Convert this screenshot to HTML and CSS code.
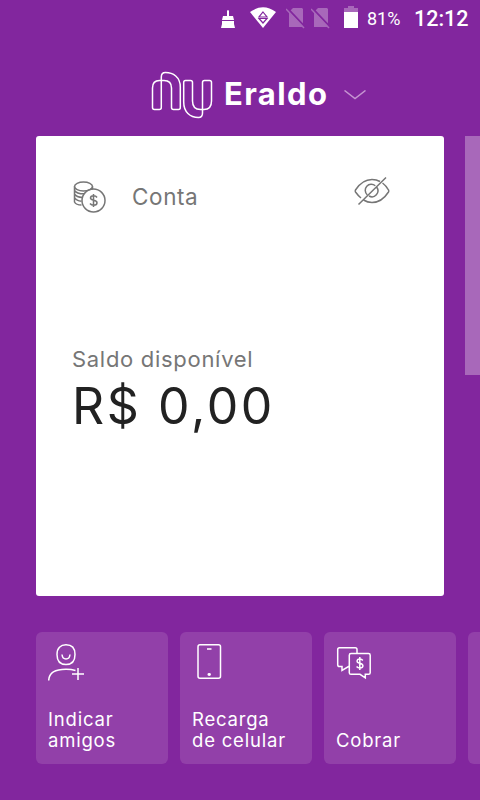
FILE: index.html
```
<!DOCTYPE html>
<html lang="pt-BR">
<head>
    <meta charset="UTF-8">
    <meta name="viewport" content="width=device-width, initial-scale=1.0">
    <title>Conta</title>
    <link rel="stylesheet" href="styles.css">
</head>
<body>
    <div class="status-bar">
        <svg class="icon-clean" width="14" height="18" viewBox="0 0 14 18" fill="#fff">
            <path d="M6 1q1-2 2 0v5h4l1 4H1l1-4h4zM1 11h12v3l1 4H0l1-4z"/>
        </svg>
        <svg class="icon-wifi" width="26" height="21" viewBox="0 0 26 21">
            <path d="M0 5Q13-4.500 26 5L13 21z" fill="#fff"/>
            <path d="M13 5l4 5H9zM9 11.500h8L13 16z" fill="none" stroke="#82269e" stroke-width="1.200"/>
        </svg>
        <svg class="icon-sim" width="20" height="21" viewBox="0 0 20 21">
            <path d="M3 4l4-4h9l1 1v18H3z" fill="#a868ba"/>
            <path d="M2 1l17 18" stroke="#82269e" stroke-width="2"/>
            <path d="M0 1l18 19" stroke="#a868ba" stroke-width="1.500"/>
        </svg>
        <svg class="icon-sim second" width="20" height="21" viewBox="0 0 20 21">
            <path d="M3 4l4-4h9l1 1v18H3z" fill="#a868ba"/>
            <path d="M2 1l17 18" stroke="#82269e" stroke-width="2"/>
            <path d="M0 1l18 19" stroke="#a868ba" stroke-width="1.500"/>
        </svg>
        <svg class="icon-battery" width="14" height="22" viewBox="0 0 14 22">
            <path d="M4 0h6v2h4v4H0V2h4z" fill="#a868ba"/>
            <path d="M0 6h14v16H0z" fill="#fff"/>
        </svg>
        <span class="battery-level">81%</span>
        <span class="clock">12:12</span>
    </div>

    <div class="header">
        <svg class="logo" width="62" height="48" viewBox="0 0 62 48">
            <path d="M1.500 36.500V17Q1.500 9.500 8.500 9.500H13Q20.500 9.500 20.500 17V36.500Q20.500 38.500 22.500 38.500H27.500Q29.300 38.500 29.300 36.500V16C29.300 6 22 1.500 14.500 1.500Q10.300 1.500 10.300 6V36.500Q10.300 38.500 8.300 38.500H3.500Q1.500 38.500 1.500 36.500Z"/>
            <path d="M60.500 11.500V30Q60.500 38.500 53 38.500H49.500Q41.500 38.500 41.500 30V11.500Q41.500 9.500 39.500 9.500H34.500Q32.700 9.500 32.700 11.500V31C32.700 41 39 46.500 47.500 46.500Q51.500 46.500 51.500 42V11.500Q51.500 9.500 53.500 9.500H58.500Q60.500 9.500 60.500 11.500Z"/>
        </svg>
        <h1>Eraldo</h1>
        <svg class="chevron" width="22" height="10" viewBox="0 0 22 10">
            <path d="M.5 .5L11 8.500 21.500 .5"/>
        </svg>
    </div>

    <div class="cards">
        <div class="card">
            <div class="card-top">
                <svg class="coins" width="34" height="32" viewBox="0 0 34 32">
                    <ellipse cx="10.500" cy="5.500" rx="9" ry="4.500"/>
                    <path d="M1.500 5.500v15.500q1.500 3 7 3M19.500 5.500v3M1.500 9.300q2 3.500 9.500 3.500M1.500 13q2 3.300 8 3.500M1.500 16.700q2 3.300 7 3.500"/>
                    <circle cx="20.500" cy="19.500" r="11.500"/>
                    <path class="dollar" d="M24 16.500q-1-1.700-3.500-1.700-3 0-3 2.300c0 3 6.500 1.500 6.500 4.600 0 1.700-1.500 2.500-3.300 2.500q-2.500 0-3.700-1.700M20.500 13v13"/>
                </svg>
                <span class="card-title">Conta</span>
                <svg class="eye" width="36" height="30" viewBox="0 0 36 30">
                    <path d="M28.500 7Q32 9.500 34.500 14q.6 1 0 2C30 23 24.500 26.500 18 26.500q-4.500 0-8.500-2.500M7 22Q4 19.500 1.500 16q-.6-1 0-2C6 7 11.500 3.500 18 3.500q4.500 0 8 2"/>
                    <path d="M22.800 11.300a6 6 0 0 1-7.800 8.700M13.200 18.700A6 6 0 0 1 21.300 9.800M32 1.500L4.500 28.500"/>
                </svg>
            </div>
            <p class="label">Saldo disponível</p>
            <p class="balance">R$ 0,00</p>
        </div>
        <div class="next-card"></div>
    </div>

    <div class="actions">
        <div class="action">
            <svg width="38" height="38" viewBox="0 0 38 38">
                <path d="M18 .8C23.500 .8 27 4 27 10.500S23.500 20.500 18 20.500 9 17 9 10.500 12.500 .8 18 .8ZM14 10.500q.5 4.500 4 4.500t4-4.500M.7 36.500C1 28 8 25.300 18 25.300q5.500 0 9.500 1.200M30 24v12M24 30h12"/>
            </svg>
            <span>Indicar<br>amigos</span>
        </div>
        <div class="action">
            <svg width="38" height="38" viewBox="0 0 38 38">
                <rect x="6" y=".8" width="22.500" height="33.500" rx="2"/>
                <path d="M15 5h4.500"/>
                <ellipse cx="17.200" cy="30.500" rx="1" ry=".7"/>
            </svg>
            <span>Recarga<br>de celular</span>
        </div>
        <div class="action">
            <svg width="38" height="38" viewBox="0 0 38 38">
                <path d="M13.500 22.500h-1L6 26.500v-4H3.500Q1.700 22.500 1.700 20.700V5.500Q1.700 3.700 3.500 3.700H19.300Q21 3.700 21 5.500V9.500M15 9.500H32.500Q34.200 9.500 34.200 11.200V28.700Q34.200 30.300 32.500 30.300H29.300V33.800L24 30.300H15Q13.300 30.300 13.300 28.700V11.200Q13.300 9.500 15 9.500Z"/>
                <path class="dollar" d="M26.800 16.500q-1-1.500-3-1.500-2.700 0-2.700 2.200c0 2.700 5.800 1.500 5.800 4.500 0 1.500-1.300 2.300-3 2.300q-2.200 0-3.300-1.500M23.800 13v13"/>
            </svg>
            <span>Cobrar</span>
        </div>
        <div class="action"></div>
    </div>
</body>
</html>
```
FILE: styles.css
```
* {
    box-sizing: border-box;
}
body {
    margin: 0;
    height: 800px;
    overflow: hidden;
    background: #82269e;
    color: #fff;
    font-family: Inter, sans-serif;
}
h1, p {
    margin: 0;
}
svg {
    flex-shrink: 0;
}
.status-bar {
    display: flex;
    justify-content: flex-end;
    align-items: center;
    height: 37px;
    padding-right: 13px;
    font-family: Roboto, sans-serif;
}
.icon-clean {
    margin-right: 15px;
}
.icon-wifi {
    margin: 0 10px 2px 0;
}
.icon-sim {
    margin-right: 5px;
}
.icon-sim.second {
    margin-right: 13px;
}
.icon-battery {
    margin: 0 9px 4px 0;
}
.battery-level {
    width: 33px;
    margin-right: 14px;
    font-size: 18px;
}
.clock {
    width: 53px;
    font-size: 21.500px;
    font-weight: 500;
}
.header {
    display: flex;
    align-items: center;
    height: 99px;
    padding: 15px 0 0 151px;
}
.logo, .chevron {
    fill: none;
    stroke: #fff;
    stroke-width: 1.500;
}
.logo {
    margin-top: 2px;
}
h1 {
    width: 104px;
    margin: 0 16px 0 11px;
    font-size: 31px;
    font-weight: 700;
    line-height: 40px;
    letter-spacing: 1.400px;
    white-space: nowrap;
}
.chevron {
    margin-top: 2px;
    stroke: #c594d1;
}
.cards {
    display: flex;
    gap: 21px;
    height: 460px;
    padding-left: 36px;
}
.card {
    flex: 0 0 408px;
    padding: 41px 36px 0;
    border-radius: 3px;
    background: #fff;
}
.next-card {
    flex: 1;
    height: 239px;
    background: #a868ba;
}
.card-top {
    display: flex;
    align-items: flex-start;
    height: 168px;
    color: #767676;
}
.coins, .eye {
    fill: none;
    stroke: #767676;
    stroke-width: 1.500;
}
.coins {
    margin: 4px 0 0 1px;
}
.eye {
    margin: -1px 18px 0 auto;
}
.card-title {
    margin: 5px 0 0 25px;
    font-size: 22.500px;
    line-height: 30px;
    letter-spacing: 0.600px;
}
.label {
    color: #767676;
    font-size: 22px;
    line-height: 28px;
    letter-spacing: 0.700px;
}
.balance {
    color: #222;
    font-size: 50px;
    line-height: 66px;
    letter-spacing: 2.600px;
    white-space: nowrap;
}
.actions {
    display: flex;
    gap: 12px;
    overflow: hidden;
    padding: 36px 0 0 36px;
}
.action {
    display: flex;
    flex: 0 0 132px;
    flex-direction: column;
    justify-content: space-between;
    height: 132px;
    padding: 12px 12px 13px;
    border-radius: 6px;
    background: #9240a9;
    font-size: 18.500px;
    line-height: 21px;
    letter-spacing: 0.800px;
    white-space: nowrap;
}
.action svg {
    fill: none;
    stroke: #fff;
    stroke-width: 1.500;
}
```
